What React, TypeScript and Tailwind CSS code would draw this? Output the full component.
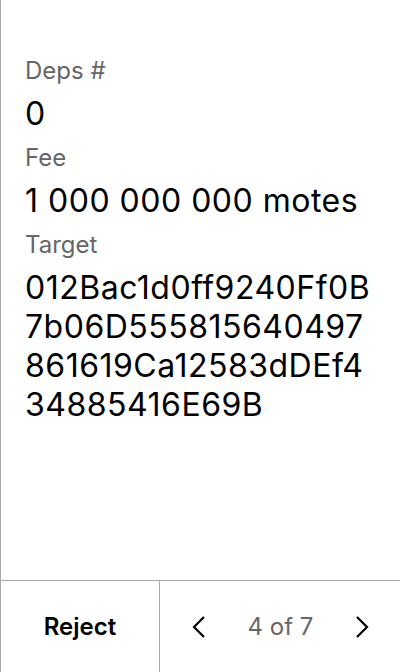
import React from "react";

function Field({ label, value }: { label: string; value: React.ReactNode }) {
  return (
    <div className="flex flex-col">
      <div className="text-[24px] leading-[29px] text-[#666666]">{label}</div>
      <div className="mt-[9px] text-[32px] leading-[39px] tracking-[0.5px] text-black break-all">{value}</div>
    </div>
  );
}

export default function App() {
  return (
    <div
      className="w-[400px] h-[672px] flex flex-col bg-white border-l border-[#aaaaaa]"
      style={{ fontFamily: "Inter, 'Noto Sans', sans-serif" }}
    >
      <div className="flex-1 px-[24px] pt-[56px] flex flex-col gap-[10px]">
        <Field label="Deps #" value="0" />
        <Field label="Fee" value="1 000 000 000 motes" />
        <Field
          label="Target"
          value={
            <>
              012Bac1d0ff9240Ff0B
              <br />
              7b06D555815640497
              <br />
              861619Ca12583dDEf4
              <br />
              34885416E69B
            </>
          }
        />
      </div>
      <div className="h-[92px] flex border-t border-[#aaaaaa]">
        <div className="w-[159px] flex items-center justify-center border-r border-[#aaaaaa] text-[24px] font-semibold text-black">
          Reject
        </div>
        <div className="flex-1 flex items-center justify-between pl-[32px] pr-[31px]">
          <svg width="14" height="22" viewBox="0 0 14 22" fill="none" stroke="black" strokeWidth="2.2">
            <path d="M12 1 L2 11 L12 21" />
          </svg>
          <span className="text-[24px] text-[#666666]">4 of 7</span>
          <svg width="14" height="22" viewBox="0 0 14 22" fill="none" stroke="black" strokeWidth="2.2">
            <path d="M2 1 L12 11 L2 21" />
          </svg>
        </div>
      </div>
    </div>
  );
}
